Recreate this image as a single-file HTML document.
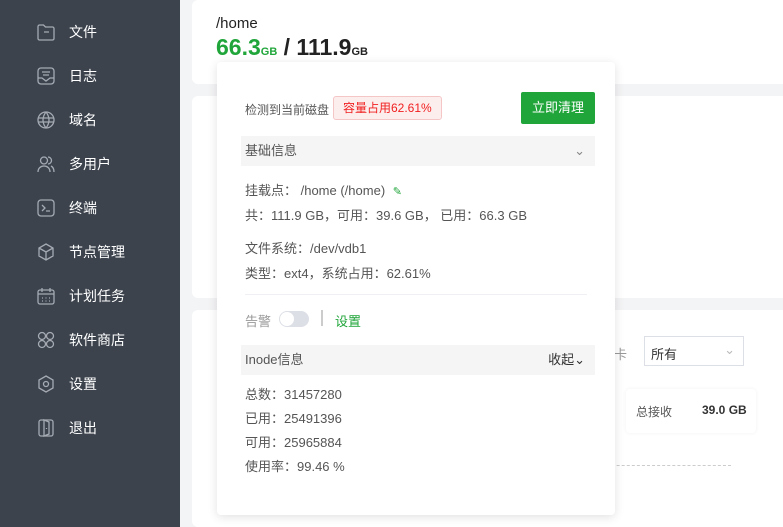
<!DOCTYPE html>
<html><head><meta charset="utf-8"><style>
*{margin:0;padding:0;box-sizing:border-box}
html,body{width:783px;height:527px;overflow:hidden}
body{background:#f3f4f5;font-family:"Liberation Sans","Noto Sans CJK SC",sans-serif;position:relative}
.sb{position:absolute;left:0;top:0;width:180px;height:527px;background:#3c434d}
.it{position:absolute;left:36px;height:24px;display:flex;align-items:center;color:#fff;font-size:14px}
.it svg{width:20px;height:20px;margin-right:13px;stroke:#a6abb3;fill:none;stroke-width:1.3}
.card{position:absolute;background:#fff;border-radius:6px;left:192px;width:600px}
.pop{position:absolute;left:217px;top:62px;width:398px;height:453px;background:#fff;border-radius:4px;box-shadow:0 2px 10px rgba(0,0,0,.12);font-size:13px;color:#555}
.t{position:absolute;white-space:nowrap}
.bar{position:absolute;left:24px;width:354px;height:30px;background:#f5f5f5;color:#555;font-size:13px;line-height:30px;padding-left:4px}
</style></head><body>
<div class="sb">
<div class="it" style="top:20px"><svg viewBox="0 0 20 20"><path d="M2 4.5a1.5 1.5 0 0 1 1.5-1.5h4l2 2h7a1.5 1.5 0 0 1 1.5 1.5v10a1.5 1.5 0 0 1-1.5 1.5h-13A1.5 1.5 0 0 1 2 16.5z M8 10h5"/></svg>文件</div>
<div class="it" style="top:64px"><svg viewBox="0 0 20 20"><rect x="2" y="2" width="16" height="16" rx="3"/><path d="M6 6h8M7 9h6M2 12h4l4 3 4-3h4"/></svg>日志</div>
<div class="it" style="top:108px"><svg viewBox="0 0 20 20"><circle cx="10" cy="10" r="8"/><path d="M2 8h16M2 12h16M10 2c-4 5-4 11 0 16M10 2c4 5 4 11 0 16"/></svg>域名</div>
<div class="it" style="top:152px"><svg viewBox="0 0 20 20"><circle cx="8" cy="6.5" r="3.5"/><path d="M2 18c0-4 3-6 6-6s6 2 6 6M12 3a3.5 3.5 0 0 1 0 7M15 12c2 1 3 3 3 6"/></svg>多用户</div>
<div class="it" style="top:196px"><svg viewBox="0 0 20 20"><rect x="2" y="2" width="16" height="16" rx="3"/><path d="M6 7l3 3-3 3M10 13h4"/></svg>终端</div>
<div class="it" style="top:240px"><svg viewBox="0 0 20 20"><path d="M10 2l7 4v8l-7 4-7-4V6zM3 6l7 4 7-4M10 10v8"/></svg>节点管理</div>
<div class="it" style="top:284px"><svg viewBox="0 0 20 20"><rect x="2" y="4" width="16" height="14" rx="2"/><path d="M2 8h16M6 2v4M14 2v4M6 12h1M9.5 12h1M13 12h1M6 15h1M9.5 15h1M13 15h1"/></svg>计划任务</div>
<div class="it" style="top:328px"><svg viewBox="0 0 20 20"><circle cx="6" cy="6" r="3.5"/><circle cx="14" cy="6" r="3.5"/><circle cx="6" cy="14" r="3.5"/><circle cx="14" cy="14" r="3.5"/></svg>软件商店</div>
<div class="it" style="top:372px"><svg viewBox="0 0 20 20"><path d="M10 2l7 4v8l-7 4-7-4V6z"/><circle cx="10" cy="10" r="2.5"/></svg>设置</div>
<div class="it" style="top:416px"><svg viewBox="0 0 20 20"><rect x="3" y="2" width="14" height="16" rx="2"/><path d="M8 2v16l5-2V4zM10.5 10v1"/></svg>退出</div>
</div>
<div class="card" style="top:0;height:84px"></div>
<div class="card" style="top:96px;height:202px"></div>
<div class="card" style="top:310px;height:217px"></div>
<div class="t" style="left:216px;top:15px;font-size:15px;color:#222">/home</div>
<div class="t" style="left:216px;top:34px;font-size:23px;font-weight:bold;color:#222"><span style="color:#20a53a">66.3<span style="font-size:11px">GB</span></span> / 111.9<span style="font-size:11px">GB</span></div>
<div class="t" style="left:614px;top:344px;font-size:13px;color:#999">卡</div>
<div class="t" style="left:644px;top:336px;width:100px;height:30px;border:1px solid #dcdfe6;background:#fff;font-size:13px;color:#333;padding:7px 6px">所有<span style="position:absolute;right:8px;top:5px;color:#bbb">⌄</span></div>
<div class="t" style="left:626px;top:389px;width:130px;height:44px;background:#fff;border-radius:4px;box-shadow:0 0 4px rgba(0,0,0,.06)"></div>
<div class="t" style="left:636px;top:403px;font-size:12px;color:#555">总接收</div>
<div class="t" style="left:702px;top:403px;font-size:12px;font-weight:bold;color:#333">39.0 GB</div>
<div class="t" style="left:566px;top:465px;width:165px;border-top:1px dashed #ccc"></div>
<div class="pop">
<div class="t" style="left:28px;top:39px;font-size:12px">检测到当前磁盘</div>
<div class="t" style="left:116px;top:34px;height:24px;padding:0 9px;line-height:22px;background:#fdeeee;border:1px solid #f5c6c6;border-radius:3px;color:#f02020;font-size:12px">容量占用62.61%</div>
<div class="t" style="left:304px;top:30px;width:74px;height:32px;background:#20a53a;border-radius:2px;color:#fff;font-size:13px;text-align:center;line-height:32px">立即清理</div>
<div class="bar" style="top:74px">基础信息<span style="position:absolute;right:10px;color:#888">⌄</span></div>
<div class="t" style="left:28px;top:118px">挂载点： /home (/home) <span style="color:#20a53a;font-size:11px;margin-left:4px">✎</span></div>
<div class="t" style="left:28px;top:143px">共：111.9 GB，可用：39.6 GB， 已用：66.3 GB</div>
<div class="t" style="left:28px;top:176px">文件系统：/dev/vdb1</div>
<div class="t" style="left:28px;top:201px">类型：ext4，系统占用：62.61%</div>
<div class="t" style="left:28px;top:232px;width:342px;border-top:1px solid #eef0f3"></div>
<div class="t" style="left:28px;top:249px;color:#999">告警</div>
<div class="t" style="left:62px;top:249px;width:30px;height:16px;border-radius:8px;background:#dcdfe6"><div style="position:absolute;left:1px;top:1px;width:14px;height:14px;border-radius:7px;background:#fff"></div></div>
<div class="t" style="left:104px;top:248px;width:2px;height:16px;background:#ccc"></div>
<div class="t" style="left:118px;top:249px;color:#20a53a">设置</div>
<div class="bar" style="top:283px">Inode信息<span style="position:absolute;right:10px;color:#333">收起⌄</span></div>
<div class="t" style="left:28px;top:322px">总数：31457280</div>
<div class="t" style="left:28px;top:346px">已用：25491396</div>
<div class="t" style="left:28px;top:370px">可用：25965884</div>
<div class="t" style="left:28px;top:394px">使用率：99.46 %</div>
</div>
</body></html>
